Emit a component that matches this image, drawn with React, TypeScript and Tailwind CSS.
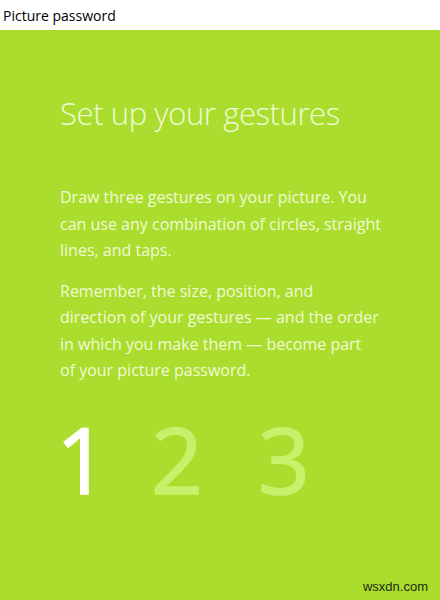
import React from 'react';

const App: React.FC = () => {
  return (
    <div className="w-[440px] h-[600px] flex flex-col bg-[#abdd2e] overflow-hidden" style={{ fontFamily: '"Open Sans", "Noto Sans", sans-serif' }}>
      <div className="h-[30px] bg-white flex items-center px-[3px] text-[14px] text-black shrink-0">
        Picture password
      </div>

      <div className="flex-1 flex flex-col px-[60px] pt-[63px] text-[#f0fad6] relative">
        <h1 className="text-[31px] font-light leading-[40px] tracking-[-0.4px]">Set up your gestures</h1>

        <p className="mt-[51px] text-[16px] leading-[26.5px] whitespace-nowrap">
          Draw three gestures on your picture. You
          <br />
          can use any combination of circles, straight
          <br />
          lines, and taps.
        </p>
        <p className="mt-[14px] text-[16px] leading-[26.5px] whitespace-nowrap">
          Remember, the size, position, and
          <br />
          direction of your gestures — and the order
          <br />
          in which you make them — become part
          <br />
          of your picture password.
        </p>

        <div className="mt-[30px] -ml-[4px] flex items-end text-[91px] font-normal leading-none [-webkit-text-stroke:1.5px_currentColor]">
          <span className="w-[95px] text-white">1</span>
          <span className="w-[107px] text-[#c9f06a]">2</span>
          <span className="text-[#c9f06a]">3</span>
        </div>

        <div className="absolute right-[12px] bottom-[4px] text-[13px] text-[#1c2a10]" style={{ fontFamily: '"Liberation Sans", sans-serif' }}>
          wsxdn.com
        </div>
      </div>
    </div>
  );
};

export default App;
